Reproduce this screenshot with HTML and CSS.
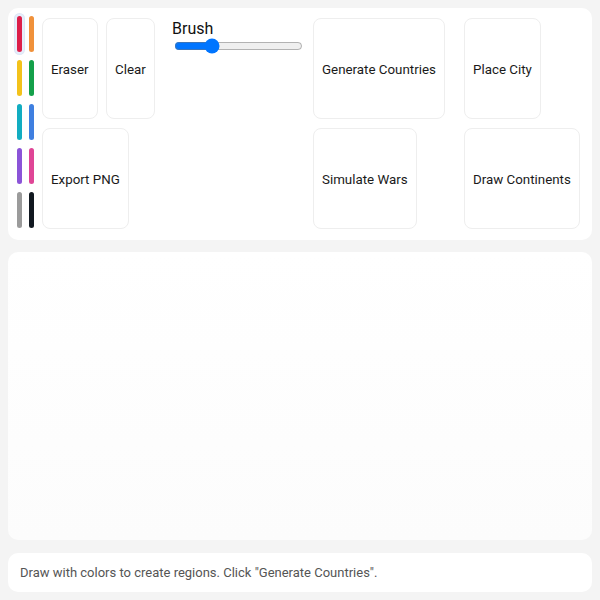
FILE: index.html
```html
<!DOCTYPE html>
<html lang="en">
<head>
    <meta charset="UTF-8">
    <meta name="viewport" content="width=device-width, initial-scale=1.0">
    <title>Map Painter</title>
    <link rel="stylesheet" href="styles.css">
</head>
<body>
    <div class="app">
        <div class="toolbar">
            <div class="swatches">
                <button class="swatch selected" style="background:#dc1f4a"></button>
                <button class="swatch" style="background:#f0913a"></button>
                <button class="swatch" style="background:#f3c21b"></button>
                <button class="swatch" style="background:#14a04a"></button>
                <button class="swatch" style="background:#12adc1"></button>
                <button class="swatch" style="background:#3f7fe0"></button>
                <button class="swatch" style="background:#8b54d8"></button>
                <button class="swatch" style="background:#df4596"></button>
                <button class="swatch" style="background:#9b9b9b"></button>
                <button class="swatch" style="background:#111820"></button>
            </div>
            <button class="tool eraser">Eraser</button>
            <button class="tool clear">Clear</button>
            <div class="brush">
                <label for="brush-size">Brush</label>
                <input type="range" id="brush-size" min="1" max="50" value="14">
            </div>
            <button class="tool generate">Generate Countries</button>
            <button class="tool city">Place City</button>
            <button class="tool export">Export PNG</button>
            <button class="tool wars">Simulate Wars</button>
            <button class="tool continents">Draw Continents</button>
        </div>
        <div class="canvas-wrap">
            <canvas id="map"></canvas>
        </div>
        <div class="status">Draw with colors to create regions. Click "Generate Countries".</div>
    </div>
</body>
</html>
```

FILE: styles.css
```css
body {
    margin: 0;
    padding: 0;
    font-family: Roboto, "Liberation Sans", Arial, sans-serif;
    background: #f4f4f4;
    color: #222;
}
.app {
    padding: 8px;
    display: flex;
    flex-direction: column;
    gap: 12px;
}
.toolbar {
    background: #fff;
    border-radius: 10px;
    padding: 10px 8px 11px 8px;
    display: grid;
    grid-template-columns: 17px 55px 47px 142px 142px 1fr;
    grid-template-rows: 101px 101px;
    gap: 9px;
}
.swatches {
    grid-column: 1;
    grid-row: 1 / span 2;
    display: grid;
    grid-template-columns: 5px 5px;
    grid-auto-rows: 36px;
    column-gap: 7px;
    row-gap: 8px;
    padding: 6px 0 0 1px;
    margin-top: -8px;
}
.swatch {
    width: 5px;
    height: 36px;
    padding: 0;
    border: none;
    border-radius: 3px;
    cursor: pointer;
}
.swatch.selected {
    box-shadow: 0 0 0 2px #e6eefb, 0 0 0 3px #dde6f6;
}
.tool {
    background: #fff;
    border: 1px solid #eeeeee;
    border-radius: 8px;
    padding: 2px 8px 0 8px;
    font-family: inherit;
    font-size: 13.333px;
    color: #1a1a1a;
    text-align: left;
    white-space: nowrap;
    cursor: pointer;
    justify-self: start;
}
.eraser {
    grid-column: 2;
    grid-row: 1;
}
.clear {
    grid-column: 3;
    grid-row: 1;
}
.brush {
    grid-column: 4;
    grid-row: 1;
    padding-left: 10px;
    display: flex;
    flex-direction: column;
    align-items: flex-start;
}
.brush label {
    font-size: 16px;
    color: #111;
    margin-top: 1px;
}
.brush input {
    margin: 0 2px;
    width: 129px;
}
.generate {
    grid-column: 5;
    grid-row: 1;
}
.city {
    grid-column: 6;
    grid-row: 1;
}
.export {
    grid-column: 2 / span 2;
    grid-row: 2;
}
.wars {
    grid-column: 5;
    grid-row: 2;
}
.continents {
    grid-column: 6;
    grid-row: 2;
}
.canvas-wrap {
    background: linear-gradient(#fff, #fcfcfc);
    border-radius: 10px;
    height: 288px;
}
.canvas-wrap canvas {
    display: block;
    width: 100%;
    height: 100%;
}
.status {
    background: #fff;
    border-radius: 10px;
    height: 39px;
    padding: 0 12px;
    display: flex;
    align-items: center;
    font-size: 13px;
    color: #555;
    margin-top: 1px;
}
```
